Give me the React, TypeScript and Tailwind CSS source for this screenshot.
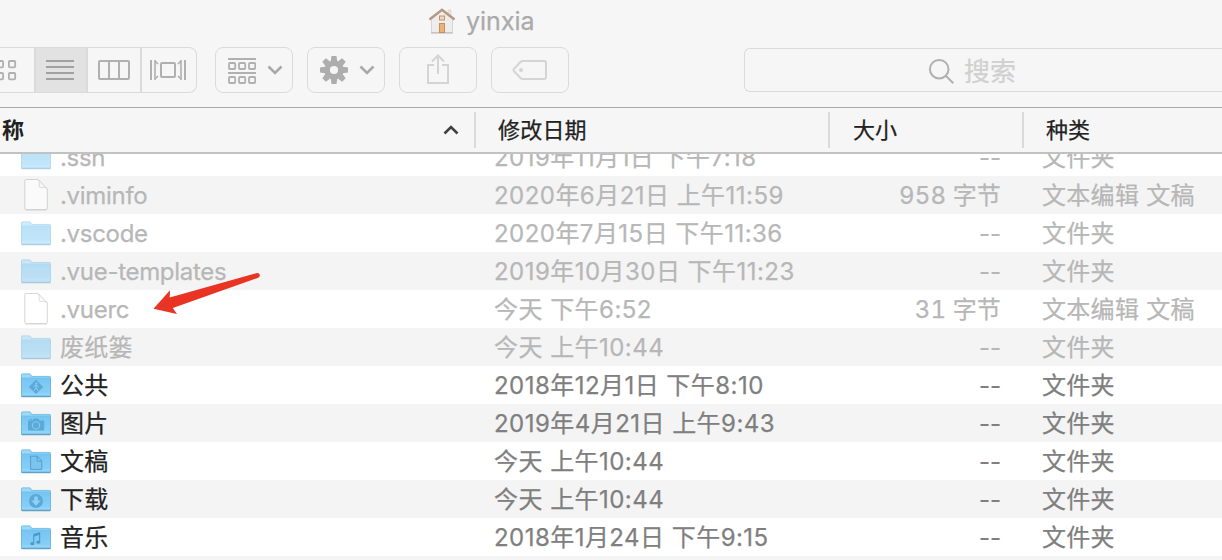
import React from "react";

type Kind = "folder" | "file";
type Emblem = "public" | "camera" | "document" | "download" | "music";
type Row = {
  name: string;
  date: string;
  size: string;
  type: string;
  kind: Kind;
  emblem?: Emblem;
  hidden?: boolean;
};

const FOLDER = "文件夹";
const TEXT = "文本编辑 文稿";

const rows: Row[] = [
  { name: ".ssh", date: "2019年11月1日 下午7:18", size: "--", type: FOLDER, kind: "folder", hidden: true },
  { name: ".viminfo", date: "2020年6月21日 上午11:59", size: "958 字节", type: TEXT, kind: "file", hidden: true },
  { name: ".vscode", date: "2020年7月15日 下午11:36", size: "--", type: FOLDER, kind: "folder", hidden: true },
  { name: ".vue-templates", date: "2019年10月30日 下午11:23", size: "--", type: FOLDER, kind: "folder", hidden: true },
  { name: ".vuerc", date: "今天 下午6:52", size: "31 字节", type: TEXT, kind: "file", hidden: true },
  { name: "废纸篓", date: "今天 上午10:44", size: "--", type: FOLDER, kind: "folder", hidden: true },
  { name: "公共", date: "2018年12月1日 下午8:10", size: "--", type: FOLDER, kind: "folder", emblem: "public" },
  { name: "图片", date: "2019年4月21日 上午9:43", size: "--", type: FOLDER, kind: "folder", emblem: "camera" },
  { name: "文稿", date: "今天 上午10:44", size: "--", type: FOLDER, kind: "folder", emblem: "document" },
  { name: "下载", date: "今天 上午10:44", size: "--", type: FOLDER, kind: "folder", emblem: "download" },
  { name: "音乐", date: "2018年1月24日 下午9:15", size: "--", type: FOLDER, kind: "folder", emblem: "music" },
];

function EmblemMark({ emblem }: { emblem: Emblem }) {
  switch (emblem) {
    case "public":
      return (
        <g>
          <path d="M15 6.7l7.2 7.2-7.2 7.2-7.2-7.2z" fill="#5ba9d8" />
          <circle cx="15.4" cy="10.6" r="1" fill="#8fd0f5" />
          <path d="M15.2 12l-.3 2.600 1.600 1.400.5 2M14.9 14.600l-.9 2-1.500 1.200M12.800 13.600l1-1.300 1.600-.3 1 1.500 1.300.3" fill="none" stroke="#8fd0f5" strokeWidth="1" />
        </g>
      );
    case "camera":
      return (
        <g>
          <path d="M7.6 9.6h3.9l1.4-2.1h4.4l1.4 2.1h3.7q.8 0 .8.8v8.2q0 .8-.8.8H7.8q-.8 0-.8-.8v-8.2q0-.8.6-.8z" fill="#5ba9d8" />
          <path d="M8.6 8h2.4v.9H8.6z" fill="#5ba9d8" />
          <circle cx="15" cy="14.4" r="3.6" fill="none" stroke="#86caf1" strokeWidth="1.1" />
        </g>
      );
    case "document":
      return <path d="M9.6 7.2h6.8l4.4 4.6v8.6H9.6zM16.2 7.2v4.800h4.6" fill="#7bc4ee" stroke="#4f9ccc" strokeWidth=".9" />;
    case "download":
      return (
        <g>
          <circle cx="15" cy="14" r="7" fill="#5ba9d8" />
          <path d="M13.2 9.5h3.6v4h2.9L15 18.7l-4.7-5.2h2.9z" fill="#8fd0f5" />
        </g>
      );
    case "music":
      return (
        <g fill="#4c9acb">
          <path d="M12.2 9l7-2v9.800h-1.1V10l-4.8 1.4v7.200h-1.1z" />
          <ellipse cx="11.3" cy="18.7" rx="2" ry="1.6" />
          <ellipse cx="17.3" cy="17.2" rx="2" ry="1.6" />
        </g>
      );
  }
}

function FolderIcon({ emblem }: { emblem?: Emblem }) {
  return (
    <svg width="30" height="26" viewBox="0 0 30 26" className="mt-[2px] block">
      <defs>
        <linearGradient id="folderFill" x1="0" y1="0" x2="0" y2="1">
          <stop offset="0" stopColor="#78c5f3" />
          <stop offset="1" stopColor="#89d0f8" />
        </linearGradient>
      </defs>
      <rect x=".5" y="23" width="29" height="2" rx="1" fill="#000" opacity=".1" />
      <path d="M0 2q0-1.500 1.500-1.500H8.500q1 0 1.500 1L11 3H28.500Q30 3 30 4.500V22.500q0 1.300-1.300 1.300H1.300Q0 23.800 0 22.500z" fill="#9bdaf8" />
      <path d="M0 5h30v17.500q0 1.300-1.300 1.300H1.300Q0 23.800 0 22.500z" fill="url(#folderFill)" />
      <path d="M.5 2.200Q.5.900 1.700.900H8.500q.7 0 1.200.9L10.600 3.400H28.300Q29.500 3.400 29.500 4.600V22.400q0 1-1 1H1.500q-1 0-1-1z" fill="none" stroke="#5ba9d6" strokeOpacity=".5" />
      <path d="M1 4.900h28" stroke="#5fb0de" strokeOpacity=".6" strokeWidth=".8" />
      <path d="M1 21h28" stroke="#a6dffb" strokeOpacity=".7" strokeWidth="1" />
      <path d="M.6 23.400h28.800" stroke="#559fca" strokeWidth="1" />
      {emblem && <EmblemMark emblem={emblem} />}
    </svg>
  );
}

function FileIcon() {
  return (
    <svg width="30" height="34" viewBox="0 0 30 34" className="block">
      <path d="M4 32h22" stroke="#999" strokeWidth="1.200" opacity=".5" />
      <path d="M3.800 3Q3.800 1.500 5.300 1.500H17L26.300 11V30Q26.300 31.500 24.800 31.500H5.300Q3.800 31.500 3.800 30z" fill="#fff" stroke="#bcbcbc" />
      <path d="M17 1.500q1.200 1 1.200 3V8.200q0 1.200 1.200 1.200H23q2.300 0 3.300 1.600z" fill="#fafafa" stroke="#c4c4c4" strokeWidth=".9" />
    </svg>
  );
}

function FileRow({ row, striped }: { row: Row; striped: boolean }) {
  return (
    <div className={`flex h-[38px] shrink-0 items-center whitespace-nowrap text-[24px] leading-[36px] ${striped ? "bg-[#f4f4f4]" : "bg-white"} ${row.hidden ? "text-[#b7b7b7]" : "text-[#7f7f7f]"}`}>
      <div className={`ml-[21px] w-[30px] shrink-0 ${row.hidden ? (row.kind === "file" ? "opacity-60" : "opacity-50") : ""}`}>
        {row.kind === "folder" ? <FolderIcon emblem={row.emblem} /> : <FileIcon />}
      </div>
      <div className={`w-[434px] shrink-0 pl-[9px] pt-[2px] ${row.name.startsWith(".") ? "tracking-[-0.3px]" : "tracking-[0.2px]"} ${row.hidden ? "" : "text-[#222222]"}`}>{row.name}</div>
      <div className="w-[380px] shrink-0 pl-[9px] pt-[2px] tracking-[0.46px]">{row.date}</div>
      <div className={`w-[136px] shrink-0 pt-[2px] text-right ${row.size === "--" ? "" : "tracking-[0.15px] tabular-nums"}`}>{row.size}</div>
      <div className="pl-[41px] pt-[2px] tracking-[0.3px]">{row.type}</div>
    </div>
  );
}

function Chevron() {
  return (
    <svg width="16" height="10" viewBox="0 0 16 10" className="block">
      <path d="M1.500 1.500L8 8l6.500-6.500" fill="none" stroke="#a9a9a9" strokeWidth="2.600" />
    </svg>
  );
}

function ToolButton({ children }: { children: React.ReactNode }) {
  return (
    <div className="flex h-[46px] w-[78px] shrink-0 items-center justify-center rounded-[8px] border-[1.5px] border-[#dbdbdb]">
      {children}
    </div>
  );
}

function ViewSwitcher() {
  return (
    <div className="flex h-[46px] w-[197px] shrink-0 overflow-hidden rounded-r-[8px] border border-l-0 border-[#dbdbdb]">
      <div className="w-[34px] shrink-0">
        <svg width="34" height="44" viewBox="0 0 34 44" fill="none" stroke="#b0b0b0" strokeWidth="1.800">
          <rect x="-3.200" y="13" width="6.300" height="6.300" rx="1" />
          <rect x="8.900" y="13" width="6.300" height="6.300" rx="1" />
          <rect x="-3.200" y="25" width="6.300" height="6.300" rx="1" />
          <rect x="8.900" y="25" width="6.300" height="6.300" rx="1" />
        </svg>
      </div>
      <div className="w-[54px] shrink-0 border-x-2 border-[#dbdbdb] bg-[#e2e2e2]">
        <svg width="50" height="44" viewBox="0 0 50 44" stroke="#a1a1a1" strokeWidth="2">
          <path d="M10 13h28M10 19h28M10 25h28M10 31h28" />
        </svg>
      </div>
      <div className="w-[54px] shrink-0 border-r-2 border-[#dbdbdb]">
        <svg width="52" height="44" viewBox="0 0 52 44" fill="none" stroke="#b0b0b0" strokeWidth="2">
          <rect x="11" y="13" width="30" height="18" rx="1" />
          <path d="M21 13v18M31 13v18" />
        </svg>
      </div>
      <div className="w-[54px] shrink-0">
        <svg width="54" height="44" viewBox="0 0 54 44" fill="none" stroke="#b0b0b0" strokeWidth="2">
          <rect x="19" y="15" width="14" height="14" rx="1" />
          <path d="M9 12v20M43 12v20" />
          <path d="M13 12v20M39 12v20" strokeWidth="1.600" />
          <path d="M13 13l3 3M13 31l3-3M39 13l-3 3M39 31l-3-3" strokeWidth="1.600" />
        </svg>
      </div>
    </div>
  );
}

function GroupIcon() {
  return (
    <svg width="28" height="26" viewBox="0 0 28 26" fill="none" stroke="#b0b0b0" strokeWidth="1.800" className="mt-[2px]">
      <path d="M0 1h28M0 15h28" />
      {[1, 11, 21].map((x) => (
        <React.Fragment key={x}>
          <rect x={x} y="5" width="6.200" height="6" rx="1" />
          <rect x={x} y="19" width="6.200" height="6" rx="1" />
        </React.Fragment>
      ))}
    </svg>
  );
}

function GearIcon() {
  return (
    <svg width="28" height="28" viewBox="-14 -14 28 28">
      <circle r="6.900" fill="none" stroke="#adadad" strokeWidth="5.600" />
      <g fill="#adadad">
        {[0, 45, 90, 135, 180, 225, 270, 315].map((a) => (
          <path key={a} d="M-3.200-9L-2.500-14h5l.7 5z" transform={`rotate(${a})`} />
        ))}
      </g>
    </svg>
  );
}

function HomeIcon() {
  return (
    <svg width="28" height="28" viewBox="0 0 28 28">
      <path d="M20 3h3v6h-3z" fill="#e6e6e6" stroke="#d2d2d2" strokeWidth=".6" />
      <path d="M3.500 12L14 3l10.500 9v13.500h-21z" fill="#ededed" />
      <path d="M3.500 13v12.500h21V13" fill="none" stroke="#cdcdcd" strokeWidth=".8" />
      <path d="M3 26h22" stroke="#b5b5b5" strokeWidth="1" />
      <path d="M1.500 12.600L14 2.800l12.500 9.800" fill="none" stroke="#b39b83" strokeWidth="2.600" />
      <rect x="11.500" y="9" width="5" height="4" fill="#dcdcdc" stroke="#cf9059" />
      <rect x="11.500" y="16.500" width="5" height="9" fill="#ecb27c" stroke="#c98e58" />
    </svg>
  );
}

export default function App() {
  return (
    <div className="relative flex h-[560px] w-[1222px] flex-col overflow-hidden bg-[#f6f6f6] font-['Inter','Noto_Sans_CJK_SC',sans-serif] [-webkit-text-stroke:0.25px]">
      <div className="flex h-[47px] shrink-0 items-start pl-[428px] pt-[7px]">
        <HomeIcon />
        <span className="ml-[10px] text-[25px] leading-[28px] text-[#aaaaaa]">yinxia</span>
      </div>

      <div className="flex h-[61px] shrink-0 items-start border-b border-[#ababab]">
        <ViewSwitcher />
        <div className="ml-[18px] flex gap-[14px]">
          <ToolButton>
            <div className="flex items-center gap-[11px] pl-[2px]"><GroupIcon /><Chevron /></div>
          </ToolButton>
          <ToolButton>
            <div className="flex items-center gap-[11px] pl-[2px]"><GearIcon /><Chevron /></div>
          </ToolButton>
          <ToolButton>
            <svg width="24" height="32" viewBox="0 0 24 32" fill="none" stroke="#d4d4d4" strokeWidth="2">
              <path d="M8 11H2v18h20V11h-6M12 20V2M6 7.500l6-6 6 6" />
            </svg>
          </ToolButton>
          <ToolButton>
            <svg width="36" height="22" viewBox="0 0 36 22" fill="none" stroke="#d4d4d4" strokeWidth="2">
              <path d="M11 2h21q2 0 2 2v14q0 2-2 2H11q-1.500 0-2.500-1L2 12.200q-1-1.200 0-2.400L8.500 3q1-1 2.500-1z" />
              <circle cx="9" cy="11" r="2" fill="#d4d4d4" stroke="none" />
            </svg>
          </ToolButton>
        </div>
        <div className="ml-[175px] mt-px flex h-[44px] flex-1 items-center rounded-l-[6px] border border-r-0 border-[#dbdbdb] pl-[183px] pt-[3px]">
          <svg width="28" height="28" viewBox="0 0 28 28" fill="none" stroke="#b0b0b0" strokeWidth="2">
            <circle cx="11.200" cy="11.200" r="9.300" />
            <path d="M17.800 17.800l7.500 7.500" />
          </svg>
          <span className="ml-[8px] text-[26px] leading-[41px] text-[#d0d0d0]">搜索</span>
        </div>
      </div>

      <div className="flex h-[46px] shrink-0 items-center border-b-2 border-[#c2c2c2] text-[22px] leading-[44px] text-[#222222]">
        <div className="flex w-[474px] shrink-0 items-center justify-between pl-[2px] pr-[15px]">
          <span className="font-bold [-webkit-text-stroke:0px]">称</span>
          <svg width="16" height="10" viewBox="0 0 16 10">
            <path d="M1.500 8.500L8 2l6.500 6.500" fill="none" stroke="#404040" strokeWidth="2.600" />
          </svg>
        </div>
        <div className="h-[36px] w-[354px] shrink-0 border-l-2 border-[#dadada] pl-[22px] leading-[36px] tracking-[0.2px]">修改日期</div>
        <div className="h-[36px] w-[194px] shrink-0 border-l-2 border-[#dadada] pl-[23px] leading-[36px]">大小</div>
        <div className="h-[36px] flex-1 border-l-2 border-[#dadada] pl-[22px] leading-[36px]">种类</div>
      </div>

      <div className="flex min-h-0 flex-1 flex-col overflow-hidden bg-[#f4f4f4]">
        <div className="-mt-[16px] flex flex-col">
          {rows.map((row, i) => (
            <FileRow key={row.name} row={row} striped={i % 2 === 1} />
          ))}
        </div>
      </div>

      <svg className="absolute left-[150px] top-[270px]" width="112" height="48" viewBox="150 270 112 48">
        <path d="M153.500 308.800L170 290.200l-.3 7.400 86.500-24.300q3-.8 3.600 1.700.3 2-2.200 2.900L172.800 308l4.200 6z" fill="#e93323" />
      </svg>
    </div>
  );
}
